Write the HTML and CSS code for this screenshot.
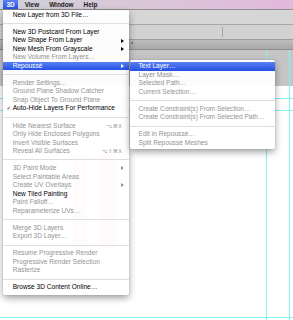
FILE: index.html
```html
<!DOCTYPE html>
<html lang="en">
  <head>
    <title>3D Menu</title>
    <meta name="viewport" content="width=device-width, initial-scale=1">
    <link rel="stylesheet" href="styles.css">
  </head>
  <body>
    <div class="menubar">
      <span class="title open">3D</span>
      <span class="title">View</span>
      <span class="title">Window</span>
      <span class="title">Help</span>
    </div>
    <div class="workspace">
      <div class="optbar"></div>
      <div class="optbar second"><span class="divider"></span></div>
      <div class="tabs"><span class="tab-mark">*</span></div>
      <div class="pasteboard"></div>
      <div class="canvas">
        <span class="blot one"></span>
        <span class="blot two"></span>
      </div>
      <span class="guide v" style="left: 266px"></span>
      <span class="guide v" style="left: 289px"></span>
      <span class="guide h" style="top: 88px"></span>
      <span class="guide h" style="top: 100px"></span>
      <span class="guide h" style="top: 307px"></span>
    </div>

    <div class="menu main-menu">
      <div class="item"><span class="check"></span><span class="label">New Layer from 3D File…</span></div>
      <div class="sep"></div>
      <div class="item"><span class="check"></span><span class="label">New 3D Postcard From Layer</span></div>
      <div class="item"><span class="check"></span><span class="label">New Shape From Layer</span><span class="arrow"></span></div>
      <div class="item"><span class="check"></span><span class="label">New Mesh From Grayscale</span><span class="arrow"></span></div>
      <div class="item off"><span class="check"></span><span class="label">New Volume From Layers…</span></div>
      <div class="item active"><span class="check"></span><span class="label">Repoussé</span><span class="arrow"></span></div>
      <div class="sep"></div>
      <div class="item off"><span class="check"></span><span class="label">Render Settings…</span></div>
      <div class="item off"><span class="check"></span><span class="label">Ground Plane Shadow Catcher</span></div>
      <div class="item off"><span class="check"></span><span class="label">Snap Object To Ground Plane</span></div>
      <div class="item"><span class="check">✓</span><span class="label">Auto-Hide Layers For Performance</span></div>
      <div class="sep"></div>
      <div class="item off"><span class="check"></span><span class="label">Hide Nearest Surface</span><span class="key">⌥⌘X</span></div>
      <div class="item off"><span class="check"></span><span class="label">Only Hide Enclosed Polygons</span></div>
      <div class="item off"><span class="check"></span><span class="label">Invert Visible Surfaces</span></div>
      <div class="item off"><span class="check"></span><span class="label">Reveal All Surfaces</span><span class="key">⌥⇧⌘X</span></div>
      <div class="sep"></div>
      <div class="item off"><span class="check"></span><span class="label">3D Paint Mode</span><span class="arrow"></span></div>
      <div class="item off"><span class="check"></span><span class="label">Select Paintable Areas</span></div>
      <div class="item off"><span class="check"></span><span class="label">Create UV Overlays</span><span class="arrow"></span></div>
      <div class="item"><span class="check"></span><span class="label">New Tiled Painting</span></div>
      <div class="item off"><span class="check"></span><span class="label">Paint Falloff…</span></div>
      <div class="item off"><span class="check"></span><span class="label">Reparameterize UVs…</span></div>
      <div class="sep"></div>
      <div class="item off"><span class="check"></span><span class="label">Merge 3D Layers</span></div>
      <div class="item off"><span class="check"></span><span class="label">Export 3D Layer…</span></div>
      <div class="sep"></div>
      <div class="item off"><span class="check"></span><span class="label">Resume Progressive Render</span></div>
      <div class="item off"><span class="check"></span><span class="label">Progressive Render Selection</span></div>
      <div class="item off"><span class="check"></span><span class="label">Rasterize</span></div>
      <div class="sep"></div>
      <div class="item"><span class="check"></span><span class="label">Browse 3D Content Online…</span></div>
    </div>

    <div class="menu sub-menu">
      <div class="item active"><span class="check"></span><span class="label">Text Layer…</span></div>
      <div class="item off"><span class="check"></span><span class="label">Layer Mask…</span></div>
      <div class="item off"><span class="check"></span><span class="label">Selected Path…</span></div>
      <div class="item off"><span class="check"></span><span class="label">Current Selection…</span></div>
      <div class="sep"></div>
      <div class="item off"><span class="check"></span><span class="label">Create Constraint(s) From Selection…</span></div>
      <div class="item off"><span class="check"></span><span class="label">Create Constraint(s) From Selected Path…</span></div>
      <div class="sep"></div>
      <div class="item off"><span class="check"></span><span class="label">Edit in Repoussé…</span></div>
      <div class="item off"><span class="check"></span><span class="label">Split Repoussé Meshes</span></div>
    </div>
  </body>
</html>
```

FILE: styles.css
```css
    body {
      font-family: "Liberation Sans", Arial, sans-serif;
      margin: 0;
      padding: 0;
      width: 293px;
      height: 320px;
      overflow: hidden;
      position: relative;
      background-color: #fff;
    }
    .menubar {
      display: flex;
      align-items: stretch;
      height: 9px;
      padding-left: 3px;
      gap: 3px;
      border-bottom: 1px solid #8e8e8e;
      background: linear-gradient(90deg, #cfd1da 0%, #d9c8d8 45%, #e2b9dc 100%);
      font-size: 6.4px;
      font-weight: bold;
      line-height: 9px;
      color: #1a1a1a;
    }
    .menubar .title {
      padding: 0 3.5px;
    }
    .menubar .title.open {
      background: linear-gradient(#5d80f1, #2652e6);
      color: #fff;
    }

    /* photoshop window behind the menus */
    .workspace {
      position: relative;
      height: 310px;
    }
    .optbar {
      height: 14px;
      background-color: #d6d6d6;
      border-bottom: 1px solid #a8a8a8;
      position: relative;
    }
    .optbar.second {
      background-color: #d2d2d2;
      border-bottom: 1px solid #9c9c9c;
    }
    .divider {
      position: absolute;
      left: 222px;
      top: 2px;
      height: 10px;
      width: 1px;
      background-color: #a4a4a4;
    }
    .tabs {
      height: 9px;
      background: linear-gradient(#bdbdbd, #a9a9a9);
      border-bottom: 1px solid #8c8c8c;
      font-size: 6px;
      line-height: 8px;
      color: #333;
    }
    .tab-mark {
      margin-left: 131px;
    }
    .pasteboard {
      height: 36px;
      background-color: #c5c5c5;
    }
    .canvas {
      height: 224px;
      background-color: #fff;
      position: relative;
    }
    .blot {
      position: absolute;
      top: 68px;
      width: 14px;
      height: 95px;
      background-color: #ffb4b4;
    }
    .blot.one { left: 73px; }
    .blot.two { left: 100px; width: 16px; }
    .guide {
      position: absolute;
      background-color: #86f1f1;
    }
    .guide.v {
      top: 40px;
      bottom: 0;
      width: 1px;
    }
    .guide.h {
      left: 0;
      right: 0;
      height: 1px;
    }

    /* menus */
    .menu {
      position: absolute;
      background-color: rgba(255, 255, 255, 0.95);
      box-shadow: 0 3px 7px rgba(0, 0, 0, 0.38), 0 0 1px rgba(0, 0, 0, 0.25);
      font-size: 6.6px;
      color: #000;
    }
    .main-menu {
      left: 3px;
      top: 10px;
      width: 126px;
      padding: 0.75px 0 3.5px;
      border-radius: 0 0 3px 3px;
    }
    .sub-menu {
      left: 130px;
      top: 60px;
      width: 145px;
      padding: 2.2px 0 1.8px;
      border-radius: 2px;
    }
    .item {
      display: flex;
      align-items: center;
      height: 8.5px;
      line-height: 8.5px;
      padding-right: 5.5px;
      white-space: nowrap;
    }
    .sub-menu .item .check {
      width: 8.5px;
    }
    .item.off {
      color: #939393;
    }
    .item.active {
      background: linear-gradient(#5b7ff0, #2450e5);
      color: #fff;
    }
    .check {
      flex: none;
      width: 9.7px;
      padding-left: 3.5px;
      box-sizing: border-box;
      font-family: "DejaVu Sans", sans-serif;
      font-size: 5.5px;
    }
    .label {
      flex: 1;
    }
    .key {
      font-family: "DejaVu Sans", sans-serif;
      font-size: 5.2px;
      letter-spacing: 0.3px;
      margin-right: 1.5px;
    }
    .arrow {
      width: 0;
      height: 0;
      border-left: 3.5px solid currentColor;
      border-top: 2.3px solid transparent;
      border-bottom: 2.3px solid transparent;
    }
    .sep {
      height: 8.6px;
      display: flex;
      align-items: center;
    }
    .sep::after {
      content: "";
      flex: 1;
      height: 1px;
      background-color: #dedede;
    }
```
